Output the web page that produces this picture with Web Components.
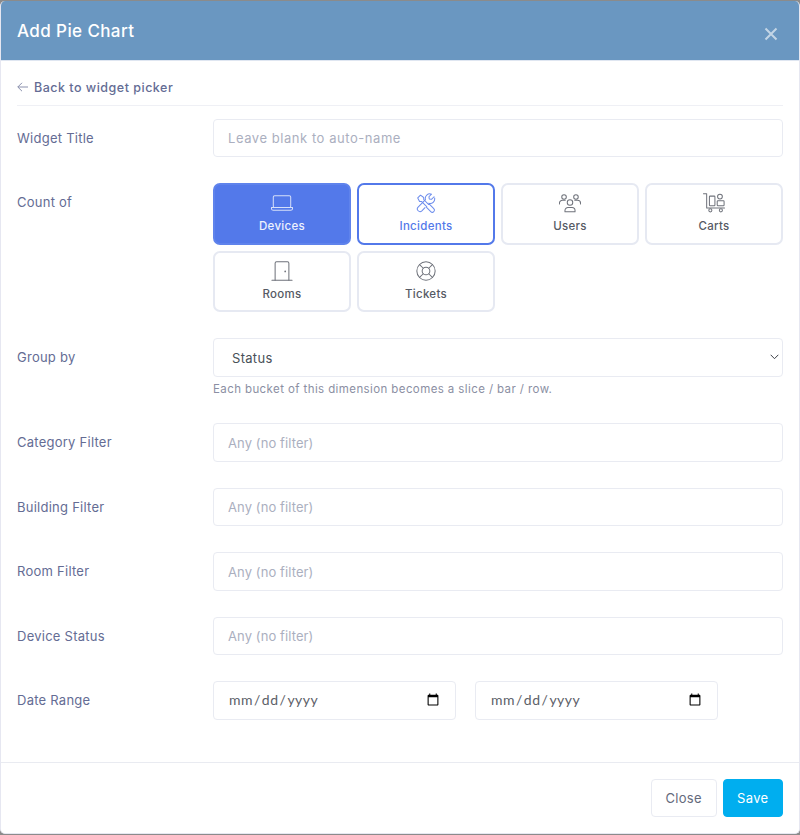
<!DOCTYPE html>
<html>
<head>
<meta charset="utf-8">
<title>Add Pie Chart</title>
<style>
  html, body { margin: 0; padding: 0; height: 835px; overflow: hidden; background: #8b8b8b; }
  body { font-family: "Inter", "Open Sans", sans-serif; }
</style>
</head>
<body>
<pie-modal heading="Add Pie Chart">
  <back-link>Back to widget picker</back-link>

  <form-row label="Widget Title"><text-field placeholder="Leave blank to auto-name"></text-field></form-row>

  <form-row label="Count of" offset="10">
    <tile-grid>
      <type-tile label="Devices" icon="laptop" state="active"></type-tile>
      <type-tile label="Incidents" icon="tools" state="focus"></type-tile>
      <type-tile label="Users" icon="users"></type-tile>
      <type-tile label="Carts" icon="cart"></type-tile>
      <type-tile label="Rooms" icon="door"></type-tile>
      <type-tile label="Tickets" icon="ring"></type-tile>
    </tile-grid>
  </form-row>

  <form-row label="Group by" hint="Each bucket of this dimension becomes a slice / bar / row.">
    <select-field value="Status"></select-field>
  </form-row>

  <form-row label="Category Filter"><text-field class="any" placeholder="Any (no filter)"></text-field></form-row>
  <form-row label="Building Filter"><text-field class="any" placeholder="Any (no filter)"></text-field></form-row>
  <form-row label="Room Filter"><text-field class="any" placeholder="Any (no filter)"></text-field></form-row>
  <form-row label="Device Status"><text-field class="any" placeholder="Any (no filter)"></text-field></form-row>

  <form-row label="Date Range">
    <date-pair></date-pair>
  </form-row>

  <modal-button slot="footer">Close</modal-button>
  <modal-button slot="footer" kind="save">Save</modal-button>
</pie-modal>

<script>
const FONT = '"Inter", "Open Sans", sans-serif';

const ICONS = {
  laptop: `<rect x="2.500" y="4" width="19" height="13" rx="1.500"/><path d="M.5 17h23v1a2 2 0 0 1-2 2h-19a2 2 0 0 1-2-2z"/>`,
  tools: `<path d="M3 6.500 6 3.500l3.500 2.500v2.200l5.500 5.500.9-.2 4.600 4.600a2.300 2.300 0 0 1-3.300 3.300l-4.600-4.600.2-.9-5.500-5.500H5z"/><path d="M20.800 5.200 18 8l-2.400-.4-.4-2.400L18 2.400a5 5 0 0 0-6.600 6l-8 8a2.900 2.900 0 0 0 4.100 4.100l3.400-3.400M15 12.300a5 5 0 0 0 6.400-5.800"/>`,
  users: `<circle cx="12" cy="11.500" r="3"/><path d="M6.500 21.500v-1.200a3.300 3.300 0 0 1 3.300-3.300h4.400a3.300 3.300 0 0 1 3.300 3.300v1.200z"/><circle cx="5.500" cy="5.500" r="2.500"/><circle cx="18.500" cy="5.500" r="2.500"/><path d="M.5 13v-.8A3.200 3.200 0 0 1 3.700 9h3.100M23.500 13v-.8A3.200 3.200 0 0 0 20.300 9h-3.100"/>`,
  cart: `<path d="M.5 2h3.500v15.500h19.500"/><rect x="7" y="4.500" width="6" height="10.500" rx=".8"/><circle cx="18.500" cy="5" r="2.600"/><rect x="15.500" y="9.500" width="7.500" height="5.500" rx=".8"/><circle cx="8" cy="20" r="1.700"/><circle cx="19.500" cy="20" r="1.700"/>`,
  door: `<path d="M4.500 22V3.500A1.500 1.500 0 0 1 6 2h12a1.500 1.500 0 0 1 1.500 1.500V22"/><path d="M1 22h22"/><circle cx="15.500" cy="12.500" r=".4"/>`,
  ring: `<circle cx="12" cy="12" r="10"/><circle cx="12" cy="12" r="4.200"/><path d="M5 5l4 4M19 5l-4 4M5 19l4-4M19 19l-4-4"/>`
};

class PieModal extends HTMLElement {
  constructor() {
    super();
    this.attachShadow({ mode: "open" }).innerHTML = `
    <style>
      :host {
        display: flex;
        flex-direction: column;
        box-sizing: border-box;
        height: 833px;
        margin-top: 1px;
        background: #fff;
        border: 1px solid #e6e7f1;
        border-top: 0;
        border-radius: 5px;
        overflow: hidden;
        font-family: ${FONT};
      }
      header {
        display: flex;
        justify-content: space-between;
        box-sizing: border-box;
        height: 60px;
        flex: none;
        padding: 18px 21px 0 16px;
        background: #6a97c1;
        border-bottom: 1px solid #dfe6f1;
      }
      h5 {
        margin: 0;
        font-size: 17px;
        line-height: 24px;
        font-weight: 500;
        letter-spacing: .4px;
        color: #fff;
      }
      svg { margin-top: 8px; }
      main { flex: 1; padding: 13.600px 16px 0; min-height: 0; }
      footer {
        display: flex;
        justify-content: flex-end;
        gap: 6px;
        flex: none;
        height: 71px;
        box-sizing: border-box;
        padding: 16px 16px 0;
        border-top: 1px solid #e9ebf1;
      }
    </style>
    <header>
      <h5></h5>
      <svg width="14" height="14" viewBox="0 0 14 14" fill="none" stroke="#fff" stroke-opacity=".6" stroke-width="2"><path d="M1.500 1.500l11 11M12.500 1.500l-11 11"/></svg>
    </header>
    <main><slot></slot></main>
    <footer><slot name="footer"></slot></footer>`;
    this.shadowRoot.querySelector("h5").textContent = this.getAttribute("heading");
  }
}

class BackLink extends HTMLElement {
  constructor() {
    super();
    this.attachShadow({ mode: "open" }).innerHTML = `
    <style>
      :host {
        display: flex;
        align-items: center;
        gap: 6px;
        box-sizing: border-box;
        height: 31px;
        padding-bottom: 5px;
        margin-bottom: 13px;
        border-bottom: 1px solid #eff0f5;
        font-size: 12.500px;
        font-weight: 500;
        letter-spacing: .5px;
        color: #646c94;
      }
    </style>
    <svg width="11" height="10" viewBox="0 0 11 10" fill="none" stroke="#8a90ad" stroke-width="1"><path d="M11 5H.800M5 .800.800 5 5 9.200"/></svg>
    <span><slot></slot></span>`;
  }
}

class FormRow extends HTMLElement {
  constructor() {
    super();
    const hint = this.getAttribute("hint");
    const offset = this.getAttribute("offset") || 10;
    this.attachShadow({ mode: "open" }).innerHTML = `
    <style>
      :host {
        display: grid;
        grid-template-columns: 196px 1fr;
        margin-bottom: 26px;
        font-family: ${FONT};
      }
      label {
        padding-top: ${offset}px;
        font-size: 13px;
        line-height: 18px;
        letter-spacing: .25px;
        color: #646c94;
      }
      p {
        margin: 4.700px 0 0;
        font-size: 11.500px;
        line-height: 16px;
        letter-spacing: .4px;
        color: #8b8fa3;
      }
    </style>
    <label></label>
    <div>
      <slot></slot>
      ${hint ? "<p></p>" : ""}
    </div>`;
    this.shadowRoot.querySelector("label").textContent = this.getAttribute("label");
    if (hint) this.shadowRoot.querySelector("p").textContent = hint;
  }
}

const FIELD_CSS = `
  box-sizing: border-box;
  width: 100%;
  height: 38.500px;
  padding: 0 14px;
  background: #fff;
  border: 1px solid #e9ebf2;
  border-radius: 4px;
  outline: none;
  font-family: ${FONT};
  font-size: 13px;
`;

class TextField extends HTMLElement {
  constructor() {
    super();
    this.attachShadow({ mode: "open" }).innerHTML = `
    <style>
      :host { display: block; }
      input { ${FIELD_CSS} color: #495057; letter-spacing: .55px; }
      :host(.any) input { letter-spacing: .1px; }
      input::placeholder { color: #abafc0; opacity: 1; }
    </style>
    <input type="text">`;
    this.shadowRoot.querySelector("input").placeholder = this.getAttribute("placeholder");
  }
}

class SelectField extends HTMLElement {
  constructor() {
    super();
    this.attachShadow({ mode: "open" }).innerHTML = `
    <style>
      :host { display: block; position: relative; }
      select { ${FIELD_CSS} padding: 1px 0 0 18px; color: #495057; letter-spacing: .3px; appearance: none; }
      svg { position: absolute; right: 4px; top: 16px; pointer-events: none; }
    </style>
    <select></select>
    <svg width="9" height="6" viewBox="0 0 9 6" fill="none" stroke="#3d4048" stroke-width="1"><path d="M.7.8 4.500 4.700 8.300.8"/></svg>`;
    const opt = document.createElement("option");
    opt.textContent = this.getAttribute("value");
    this.shadowRoot.querySelector("select").append(opt);
  }
}

class DatePair extends HTMLElement {
  constructor() {
    super();
    this.attachShadow({ mode: "open" }).innerHTML = `
    <style>
      :host { display: grid; grid-template-columns: 242.500px 242.500px; column-gap: 19.500px; }
      input { ${FIELD_CSS} padding: 0 13px 2px 14px; color: #5c6068; font-family: "Lato", sans-serif; font-size: 14px; letter-spacing: .5px; }
    </style>
    <input type="date"><input type="date">`;
  }
}

class TileGrid extends HTMLElement {
  constructor() {
    super();
    this.attachShadow({ mode: "open" }).innerHTML = `
    <style>
      :host { display: grid; grid-template-columns: repeat(4, 1fr); gap: 6px; }
    </style>
    <slot></slot>`;
  }
}

class TypeTile extends HTMLElement {
  constructor() {
    super();
    this.attachShadow({ mode: "open" }).innerHTML = `
    <style>
      :host {
        display: flex;
        flex-direction: column;
        align-items: center;
        box-sizing: border-box;
        height: 61.500px;
        padding-top: 7px;
        border: 2px solid #e6e9f2;
        border-radius: 7px;
        font-size: 11.500px;
        font-weight: 500;
        line-height: 16px;
        letter-spacing: .3px;
        color: #565a64;
        background: #fff;
      }
      :host([state="active"]) { background: #5379ea; border-color: #5f83ec; color: #eef2fd; }
      :host([state="focus"]) { border-color: #5379ea; color: #5379ea; }
      svg { display: block; margin-bottom: 4px; }
    </style>
    <svg width="22" height="22" viewBox="0 0 24 24" fill="none" stroke="currentColor" stroke-width="1.100" stroke-linejoin="round" stroke-linecap="round" opacity=".85">${ICONS[this.getAttribute("icon")]}</svg>
    <span></span>`;
    this.shadowRoot.querySelector("span").textContent = this.getAttribute("label");
  }
}

class ModalButton extends HTMLElement {
  constructor() {
    super();
    this.attachShadow({ mode: "open" }).innerHTML = `
    <style>
      :host {
        display: flex;
        align-items: center;
        box-sizing: border-box;
        height: 38px;
        padding: 0 13.500px;
        border: 1px solid #e9ebf2;
        border-radius: 4px;
        font-size: 13px;
        letter-spacing: .35px;
        color: #646a7c;
        background: #fff;
      }
      :host([kind="save"]) { background: #00aeef; border-color: #00aeef; color: #fff; }
    </style>
    <slot></slot>`;
  }
}

customElements.define("pie-modal", PieModal);
customElements.define("back-link", BackLink);
customElements.define("form-row", FormRow);
customElements.define("text-field", TextField);
customElements.define("select-field", SelectField);
customElements.define("date-pair", DatePair);
customElements.define("tile-grid", TileGrid);
customElements.define("type-tile", TypeTile);
customElements.define("modal-button", ModalButton);
</script>
</body>
</html>
